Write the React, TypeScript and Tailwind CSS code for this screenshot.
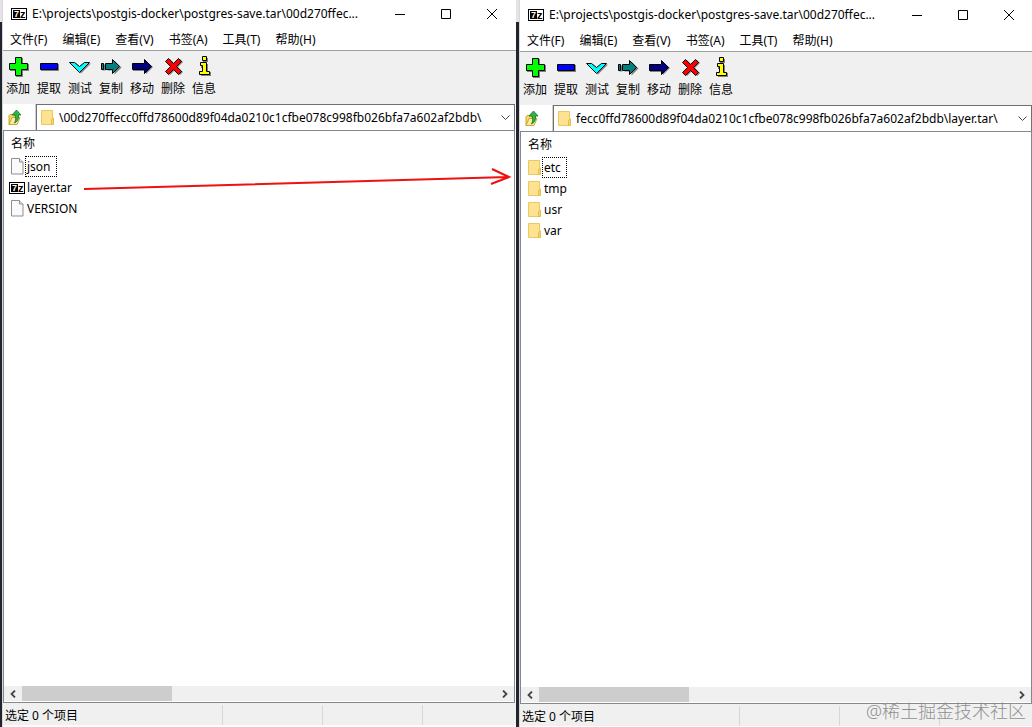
import React from 'react';

type FileKind = 'file' | 'archive' | 'folder';
type Entry = { name: string; kind: FileKind; focused?: boolean };
type WindowProps = { id: string; title: string; path: string; entries: Entry[] };

const svgProps = { 'aria-hidden': true, className: 'block shrink-0' } as const;

const SevenZip = () => (
  <svg {...svgProps} width="16" height="12" viewBox="0 0 16 12" shapeRendering="crispEdges">
    <rect width="16" height="12" fill="#000" />
    <rect x="1" y="1" width="14" height="10" fill="#fff" />
    <rect x="2" y="2" width="7" height="8" fill="#000" />
    <text x="3" y="9" fontFamily="Liberation Sans" fontWeight="700" fontSize="9" fill="#fff">7</text>
    <text x="9" y="10" fontFamily="Liberation Sans" fontWeight="700" fontSize="11" fill="#000">z</text>
  </svg>
);

const Folder = () => (
  <svg {...svgProps} width="14" height="17" viewBox="0 0 14 17">
    <path d="M.5 1.500h11v8l1 1v5H.5z" fill="#fde292" stroke="#ecc95e" />
    <path d="M10.500 15.500v-5l2-1.500v6.500z" fill="#fbd768" stroke="#e5bd4c" />
  </svg>
);

const Doc = () => (
  <svg {...svgProps} width="14" height="17" viewBox="0 0 14 17">
    <path d="M.5.500h8l3.500 3.500v12H.5z" fill="#fafafa" stroke="#8f8f8f" />
    <path d="M8.500.500v3.500H12" fill="#e8e8e8" stroke="#8f8f8f" />
  </svg>
);

const UpFolder = () => (
  <svg {...svgProps} width="15" height="17" viewBox="0 0 15 17">
    <path d="M1 15.500V6.500l1-1h3l1 1h3v3z" fill="#f3d66a" stroke="#c9a63a" />
    <path d="M1 15.500l3-7h8l-3 7z" fill="#ffeb9a" stroke="#c9a63a" />
    <path d="M4 6l4.500-5L13 6h-2.500c.5 4-1 6.500-4 8 1.500-3 1.500-5 .5-8z" fill="#2fb344" stroke="#14752a" strokeWidth=".8" />
  </svg>
);

const tools: { label: string; icon: React.ReactNode }[] = [
  { label: '添加', icon: (<g transform="translate(1 0)"><path d="M8 2h7v6h6v7h-6v6H8v-6H2V8h6z" fill="#808080" /><path d="M7.500 1.500h6v6h6v6h-6v6h-6v-6h-6v-6h6z" fill="#0f0" stroke="#000" /></g>) },
  { label: '提取', icon: (<><path d="M3 8h18v7H3z" fill="#808080" /><path d="M2.500 7.500h17v6h-17z" fill="#00f" stroke="#000" /></>) },
  { label: '测试', icon: (<><path d="M2 7.500h5l5 4 5-4h5l-10 10z" fill="#808080" /><path d="M.500 6.500h5l5 4 5-4h5l-10 10z" fill="#0ff" stroke="#000" /></>) },
  { label: '复制', icon: (<><path d="M2.500 8.500h3v6h-3zM7.500 8.500h7v-4l7 7-7 7v-4h-7z" fill="#808080" /><path d="M1.500 7.500h2v6h-2zM5.500 7.500h7v-4l7 7-7 7v-4h-7z" fill="#008080" stroke="#000" /></>) },
  { label: '移动', icon: (<g transform="translate(1 0)"><path d="M1 8h12V4l8 7-7 7v-3H1z" fill="#808080" /><path d="M.500 7.500h12v-4l7 7-7 7v-4h-12z" fill="#000080" stroke="#000" /></g>) },
  { label: '删除', icon: (<g transform="translate(1 0)"><path d="M4 6l3-3 5 5 5-5 3 3-5 5 5 5-3 3-5-5-5 5-3-3 5-5z" fill="#808080" /><path d="M2.500 5.500l3-3 5 5 5-5 3 3-5 5 5 5-3 3-5-5-5 5-3-3 5-5z" fill="#f00" stroke="#000" /></g>) },
  { label: '信息', icon: (<g transform="translate(1 0)"><path d="M9 2h5v4H9zM7 8h7v8h3v4H7v-4h3v-4H7z" fill="#808080" /><path d="M8.500.500h4v4h-4zM6.500 6.500h6v9h3v3h-10v-3h3v-6h-2z" fill="#ff0" stroke="#000" /></g>) },
];

const menus = ['文件(F)', '编辑(E)', '查看(V)', '书签(A)', '工具(T)', '帮助(H)'];

const EntryIcon = ({ kind }: { kind: FileKind }) =>
  kind === 'folder' ? <Folder /> : kind === 'archive' ? <SevenZip /> : <Doc />;

const Chevron = ({ dir }: { dir: 'left' | 'right' }) => (
  <svg {...svgProps} width="8" height="8" viewBox="0 0 8 8">
    <path d={dir === 'left' ? 'M6 .5L2.500 4 6 7.500' : 'M2 .5L5.500 4 2 7.500'} fill="none" stroke="#444" strokeWidth="1.800" />
  </svg>
);

function CaptionButtons() {
  return (
    <div className="flex h-7 shrink-0 pr-px">
      <button aria-label="最小化" className="flex w-[46px] items-center justify-center">
        <svg {...svgProps} width="10" height="10"><path d="M0 5.500h10" stroke="#000" /></svg>
      </button>
      <button aria-label="最大化" className="flex w-[46px] items-center justify-center">
        <svg {...svgProps} width="10" height="10"><path d="M.5.500h9v9h-9z" fill="none" stroke="#000" /></svg>
      </button>
      <button aria-label="关闭" className="flex w-[46px] items-center justify-center">
        <svg {...svgProps} width="10" height="10"><path d="M0 0l10 10M10 0L0 10" stroke="#000" /></svg>
      </button>
    </div>
  );
}

function ArchiveWindow({ id, title, path, entries }: WindowProps) {
  return (
    <section className="flex min-h-0 min-w-0 flex-1 flex-col bg-white">
      <header className="flex h-7 items-center pl-2">
        <SevenZip />
        <h1 className="ml-[5px] min-w-0 flex-1 truncate">{title}</h1>
        <CaptionButtons />
      </header>
      <nav className="flex h-[22px] items-center gap-[15px] pl-[7px] pt-px">
        {menus.map((m) => <button key={m} className="shrink-0">{m}</button>)}
      </nav>
      <div className="flex h-[54px] shrink-0 gap-px border-t border-[#a0a0a0] bg-[#f0f0f0] pt-[5px]">
        {tools.map((t) => (
          <button key={t.label} className="flex w-[30px] flex-col items-center">
            <svg {...svgProps} width="22" height="22" viewBox="0 0 22 22">{t.icon}</svg>
            <span className="mt-[3px] leading-4">{t.label}</span>
          </button>
        ))}
      </div>
      <div className="flex h-[26px] shrink-0">
        <button aria-label="上一级" className="flex w-[33px] items-center border-r border-[#d0d0d0] pl-[5px]"><UpFolder /></button>
        <div className="mr-px flex min-w-0 flex-1 items-center border border-b-0 border-[#707070] pl-1">
          <Folder />
          <input id={`${id}-path`} aria-label="路径" defaultValue={path} className="ml-1 min-w-0 flex-1 bg-transparent outline-none" />
          <button aria-label="展开路径" className="flex h-full w-[17px] items-center justify-center">
            <svg {...svgProps} width="9" height="6"><path d="M.5.500l4 4 4-4" fill="none" stroke="#444" /></svg>
          </button>
        </div>
      </div>
      <div className="mr-px flex min-h-0 flex-1 flex-col border border-[#828790] pb-px">
        <div className="min-h-0 flex-1">
          <table className="border-collapse">
            <thead><tr><th className="h-[25px] pl-[7px] text-left font-normal">名称</th></tr></thead>
            <tbody>
              {entries.map((e) => (
                <tr key={e.name}>
                  <td className="h-[21px] p-0">
                    <div className="flex h-[21px] items-center pl-[5px]">
                      <span className="flex w-4 justify-end"><EntryIcon kind={e.kind} /></span>
                      <span className={e.focused ? 'border border-dotted border-black pl-px pr-[5px] leading-[19px]' : 'border border-transparent pl-px pr-[5px] leading-[19px]'}>{e.name}</span>
                    </div>
                  </td>
                </tr>
              ))}
            </tbody>
          </table>
        </div>
        <div className="flex h-[15px] bg-[#f0f0f0]">
          <button aria-label="向左滚动" className="flex w-[18px] items-center justify-center"><Chevron dir="left" /></button>
          <div className="flex-1"><div className="h-full w-[150px] bg-[#cdcdcd]" /></div>
          <button aria-label="向右滚动" className="flex w-[18px] items-center justify-center"><Chevron dir="right" /></button>
        </div>
      </div>
      <footer className="flex h-[22px] shrink-0 bg-[#f0f0f0] pt-[2px]">
        <div className="w-[220px] border-r border-[#d7d7d7] pl-[2px] pt-px leading-5">选定 0 个项目</div>
        <div className="w-[100px] border-r border-[#d7d7d7]" />
        <div className="w-[100px] border-r border-[#d7d7d7]" />
      </footer>
    </section>
  );
}

const Backdrop = () => (
  <div className="flex flex-col border-r border-[#d8d8d8]">
    <div className="h-[22px] bg-[#e4e4e8]" />
    <div className="flex-1 bg-[#20242c]" />
  </div>
);

export default function App() {
  return (
    <main className="relative grid h-screen grid-cols-[3px_513fr_4px_512fr] overflow-hidden bg-white font-['Noto_Sans','Noto_Sans_CJK_SC',sans-serif] text-[12px] leading-4 text-black">
      <Backdrop />
      <div className="flex min-w-0 flex-col pb-[2px]">
        <ArchiveWindow
          id="left"
          title="E:\projects\postgis-docker\postgres-save.tar\00d270ffec..."
          path="\00d270ffecc0ffd78600d89f04da0210c1cfbe078c998fb026bfa7a602af2bdb\"
          entries={[{ name: 'json', kind: 'file', focused: true }, { name: 'layer.tar', kind: 'archive' }, { name: 'VERSION', kind: 'file' }]}
        />
      </div>
      <Backdrop />
      <div className="-mr-px flex min-w-0 flex-col pb-px pt-px">
        <ArchiveWindow
          id="right"
          title="E:\projects\postgis-docker\postgres-save.tar\00d270ffec..."
          path="fecc0ffd78600d89f04da0210c1cfbe078c998fb026bfa7a602af2bdb\layer.tar\"
          entries={[{ name: 'etc', kind: 'folder', focused: true }, { name: 'tmp', kind: 'folder' }, { name: 'usr', kind: 'folder' }, { name: 'var', kind: 'folder' }]}
        />
      </div>
      <svg aria-hidden className="pointer-events-none absolute left-[84px] top-[166px]" width="428" height="28" fill="none" stroke="#f01010" strokeWidth="2">
        <path d="M0 23L424 11M408 3L425 11L407 18" />
      </svg>
      <p className="pointer-events-none absolute bottom-1 right-[6px] text-[18px] font-light leading-6 text-[#909090]">@稀土掘金技术社区</p>
    </main>
  );
}
